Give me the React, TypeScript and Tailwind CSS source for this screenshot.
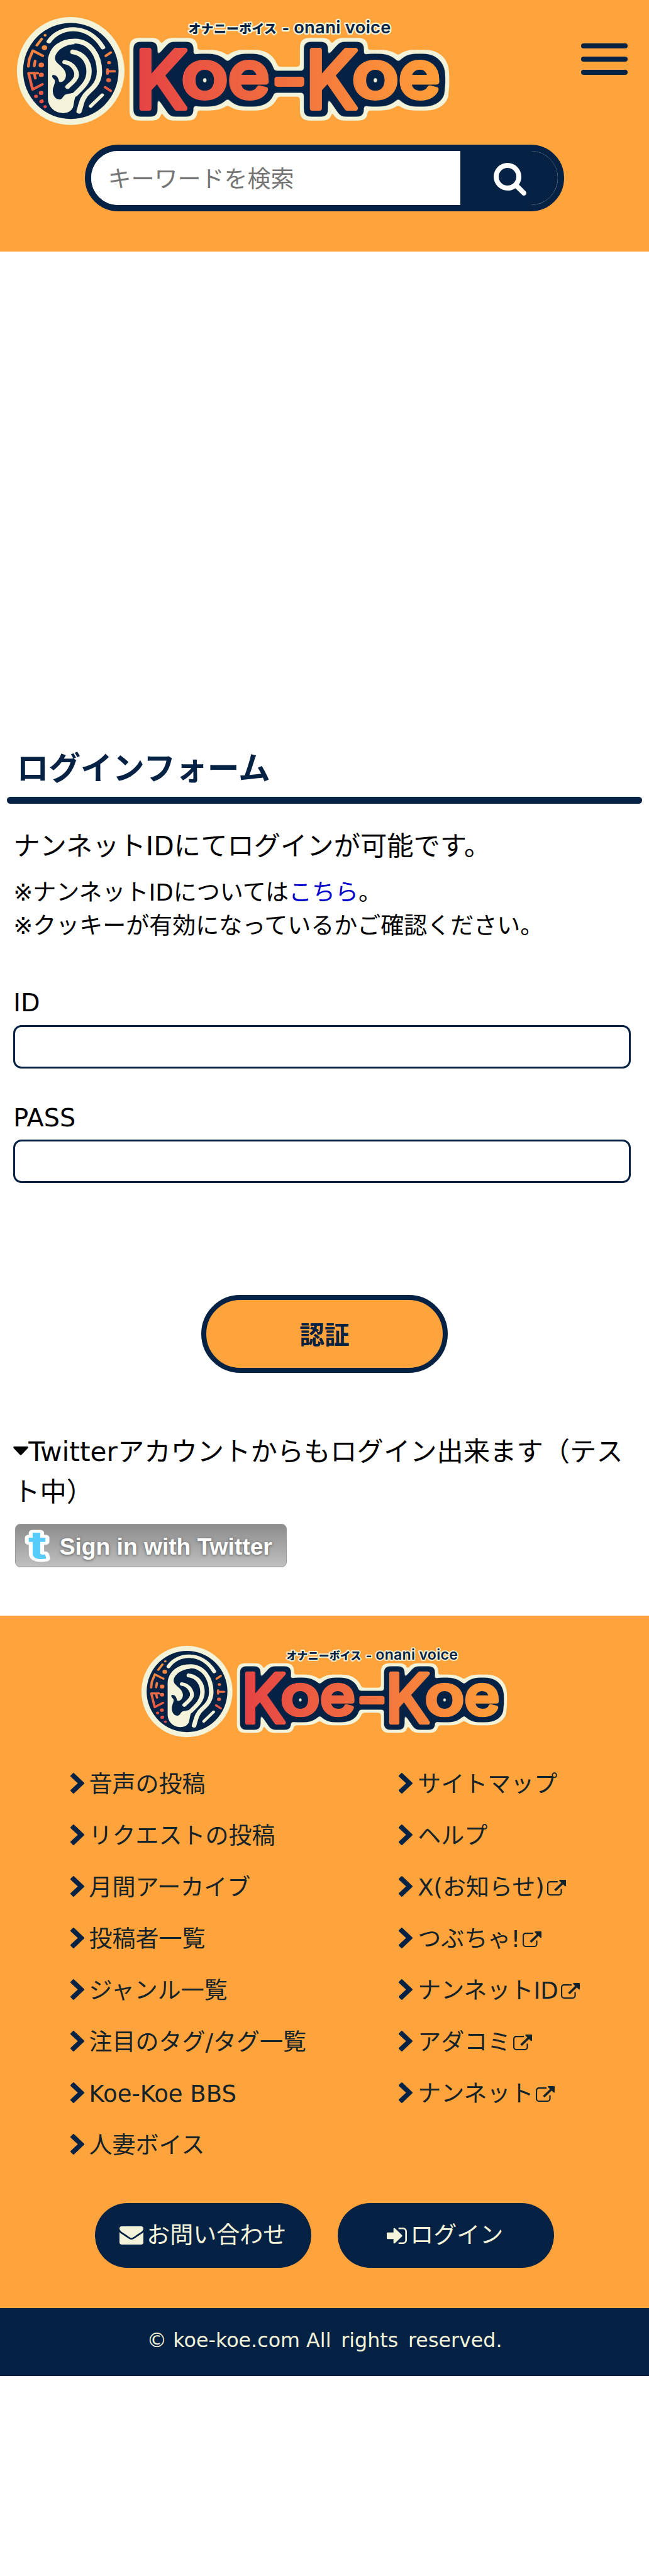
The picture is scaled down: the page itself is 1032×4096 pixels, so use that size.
import type { ReactNode } from "react";

// Letters of the word mark: character, left edge, drawn width, baseline and size
const LETTERS = [
  { char: "K", x: 243, width: 94, y: 194, size: 143 },
  { char: "o", x: 327, width: 83, y: 175.6, size: 114 },
  { char: "e", x: 411, width: 74, y: 175.6, size: 114 },
  { char: "-", x: 490, width: 62, y: 182, size: 114 },
  { char: "K", x: 550, width: 94, y: 194, size: 143 },
  { char: "o", x: 634.5, width: 83, y: 175.6, size: 114 },
  { char: "e", x: 718.5, width: 74, y: 175.6, size: 114 },
];

const LEFT_LINKS = [
  "音声の投稿",
  "リクエストの投稿",
  "月間アーカイブ",
  "投稿者一覧",
  "ジャンル一覧",
  "注目のタグ/タグ一覧",
  "Koe-Koe BBS",
  "人妻ボイス",
];

const RIGHT_LINKS = [
  { label: "サイトマップ", external: false },
  { label: "ヘルプ", external: false },
  { label: "X(お知らせ)", external: true },
  { label: "つぶちゃ!", external: true },
  { label: "ナンネットID", external: true },
  { label: "アダコミ", external: true },
  { label: "ナンネット", external: true },
];

const WordMark = () => (
  <g
    fill="url(#word)"
    stroke="url(#word)"
    strokeWidth="9"
    strokeLinejoin="round"
    filter="url(#outline)"
    className="font-['Inter',sans-serif] font-normal"
  >
    {LETTERS.map((l) => (
      <text key={l.x} x={l.x} y={l.y} fontSize={l.size} textLength={l.width} lengthAdjust="spacingAndGlyphs">
        {l.char}
      </text>
    ))}
  </g>
);

const Ear = () => (
  <g transform="scale(.38265 .33333)" fill="none" strokeLinecap="round" strokeLinejoin="round">
    <ellipse cx="331.5" cy="382" rx="253.5" ry="292" fill="#f3f3d9" />
    <ellipse cx="332" cy="382" rx="225" ry="260" fill="#052244" />
    {/* Ear */}
    <g stroke="#f3f3d9">
      <path d="M229 222C278 138 412 120 483 254" strokeWidth="22" />
      <path d="M238 330C240 255 290 220 352 220C425 222 467 300 467 385C467 440 440 470 415 495C385 525 382 560 371 600" strokeWidth="25" />
      <path d="M342 279C392 287 418 335 418 385C418 440 385 472 352 508" strokeWidth="25" />
      <path d="M303 334C345 340 375 395 350 430C338 448 325 458 317 468" strokeWidth="22" />
      <path d="M425 573L480 512" strokeWidth="17" />
    </g>
    <path
      d="M224 330C224 270 270 218 330 210L350 237C300 238 254 280 258 318C262 345 305 360 309 400C311 430 290 448 277 440C273 415 262 402 248 404C240 408 246 420 256 430C262 445 246 470 247 490C248 520 262 537 280 536C296 533 295 512 310 508L345 500L368 498C345 525 350 550 342 580C333 601 315 610 295 610C250 608 224 570 224 530Z"
      fill="#f3f3d9"
    />
    {/* Ornaments round the rim */}
    <g stroke="url(#rim)" strokeWidth="13">
      <path d="M172 243L195 209M132 357L136 320L153 272L200 300M160 355L164 328M176 394H133L152 482L198 454M160 398L165 421M191 550L197 542" />
      <path d="M497 300L520 282M512 384H538M505 374V396M494 470L520 490" />
    </g>
    <g fill="url(#rim)">
      <circle cx="211" cy="189" r="7" />
      <circle cx="208" cy="256" r="13" />
      <circle cx="193" cy="350" r="13" />
      <circle cx="193" cy="403" r="12" />
      <circle cx="192" cy="501" r="11" />
      <circle cx="168" cy="519" r="9" />
      <circle cx="194" cy="547" r="10" />
      <circle cx="211" cy="575" r="8" />
      <circle cx="512" cy="337" r="9" />
      <circle cx="510" cy="432" r="11" />
    </g>
  </g>
);

const Logo = ({ className }: { className: string }) => (
  <svg viewBox="30 30 780 195" className={className} role="img" aria-label="Koe-Koe">
    <defs>
      <linearGradient id="word" gradientUnits="userSpaceOnUse" x1="250" y1="0" x2="795" y2="0">
        <stop offset="0" stopColor="#e54444" />
        <stop offset="1" stopColor="#ff9f38" />
      </linearGradient>
      <linearGradient id="rim" gradientUnits="userSpaceOnUse" x1="0" y1="180" x2="0" y2="580">
        <stop offset="0" stopColor="#fb9a3e" />
        <stop offset="1" stopColor="#e54444" />
      </linearGradient>
      {/* Navy outline with a cream one outside it, both with round corners */}
      <filter id="outline" filterUnits="userSpaceOnUse" x="200" y="40" width="640" height="200" colorInterpolationFilters="sRGB">
        <feMorphology in="SourceAlpha" operator="dilate" radius="7" />
        <feGaussianBlur stdDeviation="4" />
        <feComponentTransfer result="inner">
          <feFuncA type="linear" slope="12" intercept="-1.42" />
        </feComponentTransfer>
        <feMorphology in="inner" operator="dilate" radius="4" />
        <feGaussianBlur stdDeviation="3" />
        <feComponentTransfer result="outer">
          <feFuncA type="linear" slope="9" intercept="-1.3" />
        </feComponentTransfer>
        <feFlood floodColor="#052244" />
        <feComposite in2="inner" operator="in" result="navy" />
        <feFlood floodColor="#f3f3d9" />
        <feComposite in2="outer" operator="in" result="cream" />
        <feMerge>
          <feMergeNode in="cream" />
          <feMergeNode in="navy" />
          <feMergeNode in="SourceGraphic" />
        </feMerge>
      </filter>
    </defs>
    <Ear />
    <WordMark />
    <g fill="#052244" stroke="#f3f3d9" strokeWidth="5" strokeLinejoin="round" paintOrder="stroke" className="font-['Inter','Noto_Sans_CJK_JP',sans-serif]">
      <text x="339" y="59" fontSize="22.5" textLength="159" className="font-black">オナニーボイス</text>
      <text x="508" y="61" fontSize="28" className="font-bold">-</text>
      <text x="529" y="59" fontSize="31" textLength="175" className="font-semibold">onani voice</text>
    </g>
  </svg>
);

const Icon = ({ box, d, className }: { box: string; d: string; className: string }) => (
  <svg viewBox={box} preserveAspectRatio="none" fill="currentColor" className={className}>
    <path d={d} />
  </svg>
);

const SearchIcon = () => (
  <Icon
    box="64 128 1664 1664"
    className="h-[52px] w-[52px]"
    d="M1216 832q0-185-131.5-316.5t-316.5-131.5-316.5 131.5-131.5 316.5 131.5 316.5 316.5 131.5 316.5-131.5 131.5-316.5zm512 832q0 52-38 90t-90 38q-54 0-90-38l-343-342q-179 124-399 124-143 0-273.5-55.5t-225-150-150-225-55.5-273.5 55.5-273.5 150-225 225-150 273.5-55.5 273.5 55.5 225 150 150 225 55.5 273.5q0 220-124 399l343 343q37 37 37 90z"
  />
);

const ChevronIcon = () => (
  <Icon
    box="346 128 1036 1510"
    className="mr-[8px] h-[33px] w-[22px] shrink-0 text-[#052244]"
    d="M1363 928l-742 691q-19 19-45 19t-45-19l-166-166q-19-19-19-45t19-45l531-480-531-480q-19-19-19-45t19-45l166-166q19-19 45-19t45 19l742 691q19 19 19 45t-19 45z"
  />
);

const ExternalIcon = () => (
  <Icon
    box="0 128 1792 1536"
    className="ml-[4px] mt-[5px] h-[25px] w-[30px] shrink-0"
    d="M1408 1056v320q0 119-84.5 203.5t-203.5 84.5h-832q-119 0-203.5-84.5t-84.5-203.5v-832q0-119 84.5-203.5t203.5-84.5h704q14 0 23 9t9 23v64q0 14-9 23t-23 9h-704q-66 0-113 47t-47 113v832q0 66 47 113t113 47h832q66 0 113-47t47-113v-320q0-14 9-23t23-9h64q14 0 23 9t9 23zm384-864v512q0 26-19 45t-45 19-45-19l-176-176-652 652q-10 10-23 10t-23-10l-114-114q-10-10-10-23t10-23l652-652-176-176q-19-19-19-45t19-45 45-19h512q26 0 45 19t19 45z"
  />
);

const EnvelopeIcon = () => (
  <Icon
    box="0 256 1792 1408"
    className="mr-[5px] h-[29px] w-[38px]"
    d="M1792 710v794q0 66-47 113t-113 47h-1472q-66 0-113-47t-47-113v-794q44 49 101 87 362 246 497 345 57 42 92.5 65.5t94.5 48 110 24.5h2q51 0 110-24.5t94.5-48 92.5-65.5q170-123 498-345 57-39 100-87zm0-294q0 79-49 151t-122 123q-376 261-468 325-10 7-42.5 31t-54 38.5-52 32.5-57.5 27-50 9h-2q-23 0-50-9t-57.5-27-52-32.5-54-38.5-42.5-31q-91-64-262-182.5t-205-142.5q-62-42-117-115.5t-55-136.5q0-78 41.5-130t118.5-52h1472q65 0 112.5 47t47.5 113z"
  />
);

const SignInIcon = () => (
  <Icon
    box="128 256 1536 1280"
    className="mr-[5px] h-[26px] w-[32px]"
    d="M1312 896q0 26-19 45l-544 544q-19 19-45 19t-45-19-19-45v-288h-448q-26 0-45-19t-19-45v-384q0-26 19-45t45-19h448v-288q0-26 19-45t45-19 45 19l544 544q19 19 19 45zm352-352v704q0 119-84.5 203.5t-203.5 84.5h-320q-13 0-22.5-9.5t-9.5-22.5q0-4-1-20t-.5-26.5 3-23.5 10-19.5 20.5-6.5h320q66 0 113-47t47-113v-704q0-66-47-113t-113-47h-312l-11.5-1-11.5-3-8-5.5-7-9-2-13.5q0-4-1-20t-.5-26.5 3-23.5 10-19.5 20.5-6.5h320q119 0 203.5 84.5t84.5 203.5z"
  />
);

const Header = () => (
  <header className="h-[399.6px] bg-[#ffa43c] pt-[26.5px]">
    <div className="flex items-start justify-between pl-[26.5px] pr-[34.4px]">
      <Logo className="h-[172px] w-[688px] overflow-visible" />
      <button className="mt-[42.3px] flex flex-col gap-[13.2px]" aria-label="menu">
        <span className="h-[8px] w-[74px] rounded-[4px] bg-[#052244]" />
        <span className="h-[8px] w-[74px] rounded-[4px] bg-[#052244]" />
        <span className="h-[8px] w-[74px] rounded-[4px] bg-[#052244]" />
      </button>
    </div>
    <form className="mx-auto mt-[31.7px] flex h-[105.8px] w-[762px] rounded-full border-[10.6px] border-[#052244] bg-white">
      <input
        className="w-[587px] rounded-l-full bg-white pl-[26.5px] pt-[6px] text-[37px] outline-none placeholder:text-[#757575]"
        placeholder="キーワードを検索"
      />
      <button type="button" className="flex flex-1 items-center rounded-r-full bg-[#052244] pl-[53px] pt-[3px] text-white" aria-label="search">
        <SearchIcon />
      </button>
    </form>
  </header>
);

const Field = ({ label, type, className }: { label: string; type: string; className: string }) => (
  <label className={`block ${className}`}>
    <span className="block text-[39.7px] leading-[50px]">{label}</span>
    <input type={type} className="mt-[10.5px] block h-[68.8px] w-[982px] rounded-[13px] border-[3px] border-[#052244] px-3 outline-none" />
  </label>
);

const TwitterButton = () => (
  <a className="ml-[2.5px] mt-[18.9px] flex h-[69.2px] w-[432px] items-center rounded-[8px] border border-[#999] bg-linear-to-b from-[#8c8c8c] to-[#c0c0c0]">
    <svg viewBox="0 0 54 68" className="ml-[8px] h-[68px] w-[54px] overflow-visible">
      <text x="12" y="54" fontSize="60" textLength="30" lengthAdjust="spacingAndGlyphs" fill="#55ccfa" stroke="#fff" strokeWidth="9" strokeLinejoin="round" paintOrder="stroke" className="font-['Inter',sans-serif] font-bold">
        t
      </text>
    </svg>
    <span className="ml-[8px] whitespace-nowrap pt-[4px] font-['Liberation_Sans',sans-serif] text-[37.2px] font-bold text-white [text-shadow:0_1px_4px_#555]">
      Sign in with Twitter
    </span>
  </a>
);

const FooterLink = ({ children, external = false }: { children: ReactNode; external?: boolean }) => (
  <li className="flex h-[82.03px] items-center whitespace-nowrap">
    <ChevronIcon />
    <span className="pt-[5px]">{children}</span>
    {external && <ExternalIcon />}
  </li>
);

const Footer = () => (
  <footer className="mt-[76.8px]">
    <div className="bg-[#ffa43c] pb-[63.5px] pt-[47.6px] text-[37px] text-[#142229]">
      <Logo className="mx-auto h-[145.5px] w-[582px] overflow-visible" />
      <div className="mt-[31.8px] flex pl-[111.6px]">
        <ul className="w-[522.6px]">
          {LEFT_LINKS.map((label) => (
            <FooterLink key={label}>{label}</FooterLink>
          ))}
        </ul>
        <ul>
          {RIGHT_LINKS.map((link) => (
            <FooterLink key={link.label} external={link.external}>
              {link.label}
            </FooterLink>
          ))}
        </ul>
      </div>
      <div className="mt-[52.9px] flex justify-center gap-[42.3px] text-[#f3f3d9]">
        <a className="flex h-[103.2px] w-[344px] items-center justify-center rounded-full bg-[#052244]">
          <EnvelopeIcon />
          お問い合わせ
        </a>
        <a className="flex h-[103.2px] w-[344px] items-center justify-center rounded-full bg-[#052244] pr-[3px]">
          <SignInIcon />
          ログイン
        </a>
      </div>
    </div>
    <p className="h-[108.5px] bg-[#052244] pt-[26px] text-center text-[31.75px] leading-[50px] text-[#f3f3d9]">
      © koe-koe.com All <span className="ml-[5.6px]">rights</span> <span className="ml-[5.6px]">reserved.</span>
    </p>
  </footer>
);

const App = () => {
  return (
    <div lang="ja" className="min-h-[4096px] w-[1032px] overflow-hidden bg-white font-['DejaVu_Sans','Noto_Sans_CJK_JP',sans-serif] text-black">
      <Header />

      {/* Login form */}
      <main className="pt-[793.3px]">
        <h2 className="pl-[26.5px] text-[50.8px] font-bold leading-[60px] text-[#052244]">ログインフォーム</h2>
        <div className="mx-[10.6px] mt-[14.5px] h-[10.6px] rounded-[5.3px] bg-[#052244]" />

        <div className="pl-[21.2px]">
          <p className="mt-[36.3px] text-[42.3px] leading-[63.5px]">ナンネットIDにてログインが可能です。</p>
          <p className="mt-[16px] text-[37px] leading-[52.9px]">
            ※ナンネットIDについては<a className="text-[#0000cc]">こちら</a>。
            <br />
            ※クッキーが有効になっているかご確認ください。
          </p>

          <Field label="ID" type="text" className="mt-[69.8px]" />
          <Field label="PASS" type="password" className="mt-[53.3px]" />
        </div>

        <button className="mx-auto mt-[177.3px] block h-[124.4px] w-[392px] rounded-full border-[8px] border-[#052244] bg-[#ffa43c] pt-[5px] text-[39.7px] font-bold text-[#052244]">
          認証
        </button>

        <div className="pl-[21.2px]">
          <p className="mt-[94.4px] whitespace-nowrap text-[42.3px] leading-[63.5px]">
            <svg viewBox="0 0 24 14" className="inline-block h-[14px] w-[24px] align-[9px]">
              <path d="M1.5 0H22.500Q25 .5 23 3L13.500 13Q12 14.500 10.500 13L1 3Q-1 .5 1.500 0Z" />
            </svg>
            Twitterアカウントからもログイン出来ます（テス
            <br />
            ト中）
          </p>
          <TwitterButton />
        </div>
      </main>

      <Footer />
    </div>
  );
};

export default App;
